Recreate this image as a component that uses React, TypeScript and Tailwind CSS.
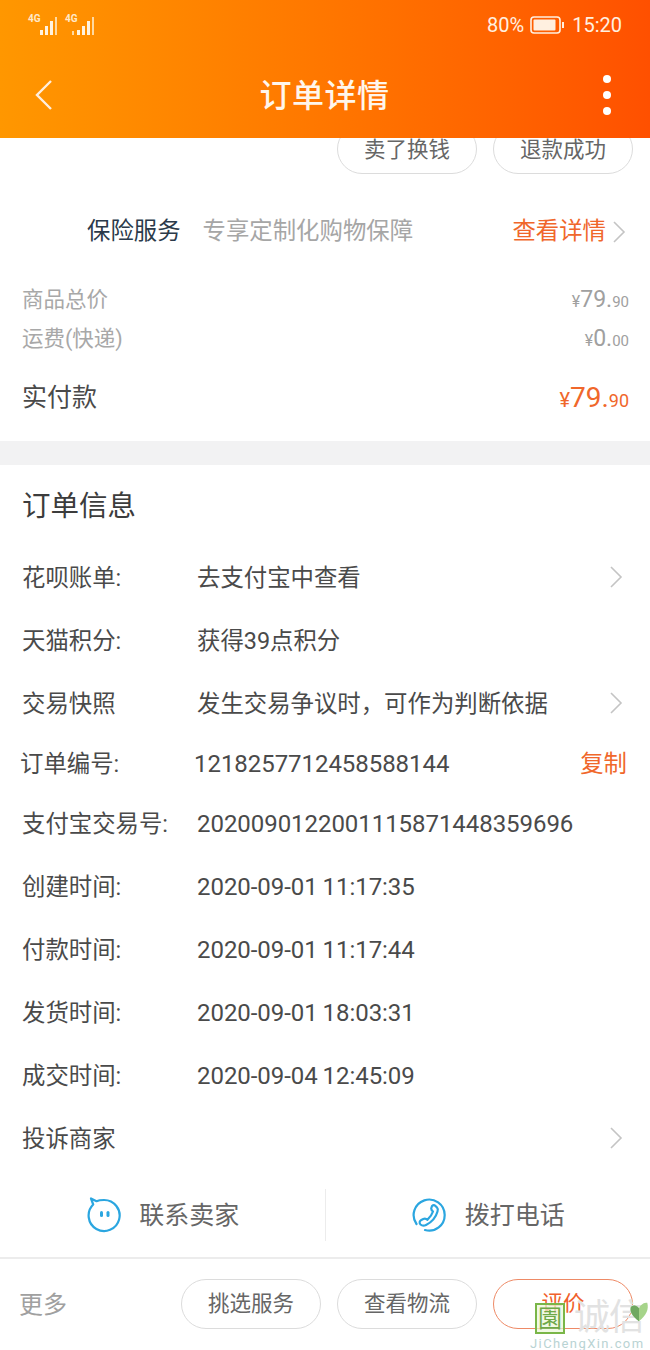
import type { ReactNode } from 'react';

const font = { fontFamily: 'Roboto, "Noto Sans CJK SC", sans-serif' };

const Chevron = ({ className = '' }: { className?: string }) => (
  <svg width="14" height="24" viewBox="0 0 14 24" fill="none" className={`text-[#c4c4c4] ${className}`}>
    <path d="M2 2l10 10L2 22" stroke="currentColor" strokeWidth="1.6" />
  </svg>
);

const Signal = ({ faded = false }: { faded?: boolean }) => (
  <div className="relative w-[32px] h-[22px]">
    <span className="absolute left-0 top-0 text-[10px] leading-[10px] font-bold text-[#ffe9c9]">4G</span>
    <svg width="32" height="22" viewBox="0 0 32 22" className="absolute left-0 top-0">
      {faded && <rect x="7" y="17" width="2" height="4" fill="#ffd9a0" />}
      <rect x="12" y="16" width="3" height="5" fill="#fff3e0" />
      <rect x="17" y="12" width="3" height="9" fill="#fff3e0" />
      <rect x="22" y="7" width="3" height="14" fill="#fff3e0" />
      <rect x="27" y="3" width="2" height="18" fill="#ffd9a0" />
    </svg>
  </div>
);

const Pill = ({ children, active = false }: { children: ReactNode; active?: boolean }) => (
  <div
    className={`w-[140px] h-[50px] pt-[2px] rounded-[25px] border flex items-center justify-center text-[21.5px] ${
      active ? 'border-[#ee8a66] text-[#f0602a]' : 'border-[#dcdcdc] text-[#666666]'
    }`}
  >
    {children}
  </div>
);

const Row = ({
  label,
  children,
  right,
  h = 'h-[63px]',
  labelClass = 'w-[175px]',
}: {
  label: string;
  children?: ReactNode;
  right?: ReactNode;
  h?: string;
  labelClass?: string;
}) => (
  <div className={`flex items-center pl-[22px] pr-[27px] text-[23.4px] text-[#4a4a4a] ${h}`}>
    <div className={`${labelClass} shrink-0 whitespace-nowrap`}>{label}</div>
    <div className="flex-1 whitespace-nowrap">{children}</div>
    {right}
  </div>
);

const Digits = ({ children }: { children: ReactNode }) => (
  <span className="text-[24px] tracking-[-0.05px] [word-spacing:-1px]">{children}</span>
);

export default function App() {
  return (
    <div className="w-[650px] h-[1350px] overflow-hidden bg-white flex flex-col relative" style={font}>
      {/* header */}
      <header className="h-[138px] shrink-0 relative z-10 bg-gradient-to-r from-[#ff9700] to-[#ff5000] text-white">
        <div className="h-[50px] flex items-center pl-[28px] pr-[28px]">
          <div className="flex gap-[5px] mt-[-1px]">
            <Signal />
            <Signal faded />
          </div>
          <div className="ml-auto flex items-center text-[20px] text-[#fff0e0]">
            <span>80%</span>
            <svg width="36" height="20" viewBox="0 0 36 20" className="ml-[6px] mr-[6px]">
              <rect x="1" y="2" width="29" height="16" rx="3" fill="none" stroke="#fff0e0" strokeWidth="1.6" />
              <rect x="3.5" y="4.5" width="22" height="11" rx="1" fill="#fff0e0" />
              <rect x="32" y="7" width="2" height="6" fill="#fff0e0" />
            </svg>
            <span>15:20</span>
          </div>
        </div>
        <div className="h-[88px] flex items-center justify-between pl-[35px] pr-[39px]">
          <svg width="18" height="32" viewBox="0 0 18 32" fill="none" className="mt-[2px]">
            <path d="M16 2L2 16l14 14" stroke="#ffeedd" strokeWidth="2.4" />
          </svg>
          <h1 className="text-[32px] font-medium tracking-[0.5px] text-[#fff6ec] mt-[4px] mr-[7px]">订单详情</h1>
          <div className="flex flex-col gap-[8px] mt-[2px]">
            <span className="w-[8px] h-[8px] rounded-full bg-white" />
            <span className="w-[8px] h-[8px] rounded-full bg-white" />
            <span className="w-[8px] h-[8px] rounded-full bg-white" />
          </div>
        </div>
      </header>

      {/* scrolled content */}
      <main className="flex-1 min-h-0 overflow-hidden">
        <div className="flex justify-end gap-[16px] pr-[17px] mt-[-14px]">
          <Pill>卖了换钱</Pill>
          <Pill>退款成功</Pill>
        </div>

        <div className="flex items-center h-[60px] mt-[28px] pl-[87px] pr-[24px] text-[23.4px] whitespace-nowrap">
          <span className="text-[#2b3a4a]">保险服务</span>
          <span className="ml-[22px] text-[#a6a6a6]">专享定制化购物保障</span>
          <span className="ml-auto text-[#f0672b] mr-[6px]">查看详情</span>
          <Chevron />
        </div>

        <div className="pl-[22px] pr-[21px] mt-[19px] text-[#a8a8a8]">
          <div className="h-[39px] flex items-center justify-between text-[21.5px]">
            <span>商品总价</span>
            <span className="text-[#a0a0a0]">
              <span className="text-[16px]">¥</span>
              <span className="text-[23px]">79.</span>
              <span className="text-[15px]">90</span>
            </span>
          </div>
          <div className="h-[39px] flex items-center justify-between text-[21.5px]">
            <span>运费(快递)</span>
            <span className="text-[#a0a0a0]">
              <span className="text-[16px]">¥</span>
              <span className="text-[23px]">0.</span>
              <span className="text-[15px]">00</span>
            </span>
          </div>
          <div className="h-[60px] mt-[9px] flex items-center justify-between">
            <span className="text-[25px] text-[#4a4a4a]">实付款</span>
            <span className="text-[#f0672b]">
              <span className="text-[20px]">¥</span>
              <span className="text-[28px]">79.</span>
              <span className="text-[18px]">90</span>
            </span>
          </div>
        </div>

        <div className="h-[24px] mt-[13px] bg-[#f2f2f3]" />

        <h2 className="pl-[22px] mt-[20px] h-[44px] flex items-center text-[28.5px] text-[#3c3c3c]">订单信息</h2>

        <div className="mt-[18px]">
          <Row label="花呗账单:" right={<Chevron className="mt-[-4px]" />}>去支付宝中查看</Row>
          <Row label="天猫积分:">获得39点积分</Row>
          <Row label="交易快照" right={<Chevron className="mt-[-4px]" />}>发生交易争议时，可作为判断依据</Row>
          <Row
            label="订单编号:"
            h="h-[57px]"
            labelClass="w-[174px] ml-[-2px]"
            right={<span className="text-[#f0672b] mr-[-4px]">复制</span>}
          >
            <Digits>1218257712458588144</Digits>
          </Row>
          <Row label="支付宝交易号:">
            <Digits>2020090122001115871448359696</Digits>
          </Row>
          <Row label="创建时间:"><Digits>2020-09-01 11:17:35</Digits></Row>
          <Row label="付款时间:"><Digits>2020-09-01 11:17:44</Digits></Row>
          <Row label="发货时间:"><Digits>2020-09-01 18:03:31</Digits></Row>
          <Row label="成交时间:"><Digits>2020-09-04 12:45:09</Digits></Row>
          <Row label="投诉商家" right={<Chevron className="mt-[-4px]" />} />
        </div>
      </main>

      {/* contact bar */}
      <div className="h-[84px] shrink-0 flex items-center border-b-2 border-[#ececec] text-[25px] text-[#666666]">
        <div className="flex-1 h-[52px] mt-[-2px] flex items-center justify-center gap-[18px] border-r border-[#ececec]">
          <svg width="36" height="36" viewBox="0 0 36 36" fill="none">
            <path
              d="M6 1.5l2.2 6A15.5 15.5 0 1 0 19 3c-3 0-5.5.3-7.5 1.2z"
              stroke="#2ba6e0"
              strokeWidth="2.2"
              strokeLinejoin="round"
            />
            <rect x="15" y="14" width="3" height="6" rx="1.5" fill="#2ba6e0" />
            <rect x="21.5" y="14" width="3" height="6" rx="1.5" fill="#2ba6e0" />
          </svg>
          <span className="pt-[2px]">联系卖家</span>
        </div>
        <div className="flex-1 h-[52px] mt-[-2px] flex items-center justify-center gap-[18px]">
          <svg width="36" height="36" viewBox="0 0 36 36" fill="none" stroke="#2ba6e0" strokeWidth="2.2" strokeLinecap="round">
            <path d="M5.5 27A15.5 15.5 0 1 1 14 33" />
            <path
              d="M21 9c1-1 2.5-1 3.5 0l1.5 1.5c1 1 1 2.5.5 4C25 20 21 25 15 28c-2 1-4 .8-5.5-.5-1.5-1.5-1-3.5.8-4.5l2-1c1.5-.7 3-.3 4 .8C19 20.5 21 17.5 22 14.5c-1-.8-1.8-2-1.8-3z"
              strokeLinejoin="round"
            />
          </svg>
          <span className="pt-[2px]">拨打电话</span>
        </div>
      </div>

      {/* bottom actions */}
      <div className="h-[91px] shrink-0 flex items-center pl-[19px] pr-[17px] pb-[2px] gap-[16px]">
        <span className="text-[24px] pt-[2px] text-[#a0a0a0] mr-auto">更多</span>
        <Pill>挑选服务</Pill>
        <Pill>查看物流</Pill>
        <Pill active>评价</Pill>
      </div>

      {/* watermark */}
      <div className="absolute left-[535px] top-[1303px] w-[115px] h-[47px]">
        <div className="absolute left-0 top-0 w-[30px] h-[31px] border-2 border-[#7ab648] bg-[#eaf7d8]/70 flex items-center justify-center text-[24px] leading-none text-[#6fa848]">
          園
        </div>
        <div className="absolute left-[39px] top-[-4px] text-[36px] leading-[38px] tracking-[-1px] text-[#e2e2e2] whitespace-nowrap">
          诚信
        </div>
        <svg width="22" height="22" viewBox="0 0 24 24" className="absolute left-[93px] top-[-2px]">
          <path d="M12 22C4 16 2 11 3 7c2-3 6-3 9 1 1-3 5-7 9-6 2 7-1 14-9 20z" fill="#a6d48a" />
          <path d="M12 22C4 16 2 11 3 7c2-3 6-3 9 1z" fill="#6fa860" />
        </svg>
        <div className="absolute left-[-5px] top-[33px] text-[13px] leading-[15px] tracking-[1.4px] text-[#b9d3d3] whitespace-nowrap">
          JiChengXin.com
        </div>
      </div>
    </div>
  );
}
